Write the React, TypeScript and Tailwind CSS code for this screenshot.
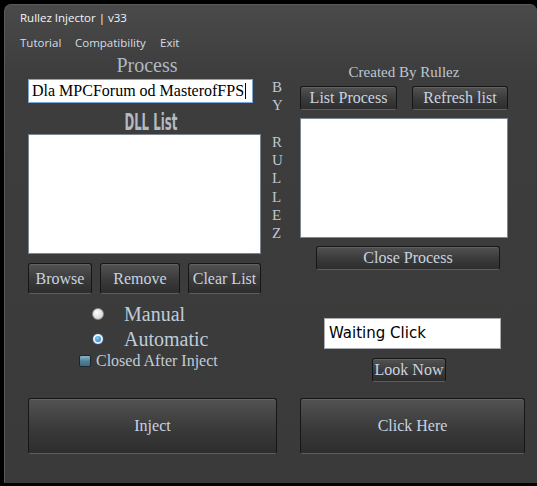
import React from "react";

const serif = "font-['Liberation_Serif','Times_New_Roman',serif]";

function Btn({ className, children }: { className: string; children: React.ReactNode }) {
  return (
    <div
      className={`flex items-center justify-center rounded-[3px] border border-[#161616] border-b-[#5e5e5e] bg-[linear-gradient(to_bottom,#525252,#3a3a3a_55%,#2d2d2d)] shadow-[inset_0_1px_0_rgba(255,255,255,0.10)] text-[16px] leading-none text-[#c8d4e0] ${serif} ${className}`}
    >
      {children}
    </div>
  );
}

function Radio({ checked }: { checked?: boolean }) {
  if (checked) {
    return (
      <div className="flex h-[12px] w-[12px] items-center justify-center rounded-full border border-[#2a4f70] bg-[radial-gradient(circle_at_40%_35%,#ffffff,#d8dde4)]">
        <div className="h-[6px] w-[6px] rounded-full bg-[radial-gradient(circle_at_40%_35%,#7ed0ff,#1a6fb8)]" />
      </div>
    );
  }
  return (
    <div className="h-[12px] w-[12px] rounded-full border border-[#8c8c8c] bg-[radial-gradient(circle_at_40%_35%,#ffffff,#c9c9c9)]" />
  );
}

export default function App() {
  const letters = ["B", "Y", "\u00a0", "R", "U", "L", "L", "E", "Z"];
  return (
    <div className="flex h-[486px] w-[537px] flex-col bg-black pl-[4px] pt-[4px]">
      <div className="h-[479px] w-[533px] rounded-t-[7px] border-l border-t border-[#5a5a5a] bg-[linear-gradient(to_bottom,#4a4a4a_0px,#3d3d3d_70px,#3a3a3a)]">
        {/* title + menu */}
        <div className="pl-[15px] pt-[5px] font-['Open_Sans','Noto_Sans',sans-serif] text-[11.5px] leading-[16px]">
          <div className="text-[#f2f6fa]">Rullez Injector | v33</div>
          <div className="mt-[9px] flex text-[#d6dde4]">
            <span className="w-[55px]">Tutorial</span>
            <span className="w-[85px]">Compatibility</span>
            <span>Exit</span>
          </div>
        </div>

        <div className="pl-[23px]">
          {/* top row */}
          <div className="flex">
            <div className="flex w-[233px] flex-col">
              <div className={`mt-[2px] pl-[5px] text-center text-[20px] leading-[24px] text-[#aeb9c4] ${serif}`}>Process</div>
              <div className={`mt-[2px] flex h-[24px] w-[225px] items-center border border-[#7aa7d6] bg-white pl-[3px] text-[16px] text-black ${serif}`}>
                Dla MPCForum od MasterofFPS
                <span className="ml-[1px] h-[16px] w-[1px] bg-black" />
              </div>
              <div className="mt-[9px] flex h-[20px] justify-center overflow-visible pl-[13px]">
                <span className="inline-block scale-x-[0.51] font-['DejaVu_Sans',sans-serif] text-[23px] font-bold leading-[20px] text-[#b3bac2]">
                  DLL List
                </span>
              </div>
              <div className="mt-[2px] h-[120px] w-[233px] border border-[#7d8590] bg-white" />
              <div className="mt-[9px] flex gap-[8px]">
                <Btn className="h-[31px] w-[64px]">Browse</Btn>
                <Btn className="h-[31px] w-[80px]">Remove</Btn>
                <Btn className="h-[31px] w-[73px]">Clear List</Btn>
              </div>
            </div>

            <div className={`w-[39px] pl-[11px] pt-[27px] text-[15px] leading-[18.3px] text-[#bcc8d4] ${serif}`}>
              {letters.map((l, i) => (
                <div key={i}>{l}</div>
              ))}
            </div>

            <div className="flex w-[208px] flex-col">
              <div className={`mt-[12px] text-center text-[15px] leading-[18px] text-[#bcc8d4] ${serif}`}>Created By Rullez</div>
              <div className="mt-[5px] flex justify-between">
                <Btn className="h-[24px] w-[97px]">List Process</Btn>
                <Btn className="h-[24px] w-[96px]">Refresh list</Btn>
              </div>
              <div className="mt-[8px] h-[120px] w-[208px] border border-[#7d8590] bg-white" />
              <div className="mt-[8px] flex">
                <Btn className="ml-[16px] h-[24px] w-[184px]">Close Process</Btn>
              </div>
            </div>
          </div>

          {/* middle row */}
          <div className="flex h-[88px]">
            <div className={`w-[249px] pt-[7px] text-[#c0ccd8] ${serif}`}>
              <div className="flex h-[25px] items-center pl-[64px] text-[20px]">
                <Radio />
                <span className="ml-[20px]">Manual</span>
              </div>
              <div className="flex h-[25px] items-center pl-[64px] text-[20px]">
                <Radio checked />
                <span className="ml-[20px]">Automatic</span>
              </div>
              <div className="flex h-[20px] items-center pl-[51px] text-[16px]">
                <div className="h-[12px] w-[12px] rounded-[2px] border border-[#1c262c] bg-[linear-gradient(to_bottom,#8fb8c8,#4f8196_50%,#3e6c80)]" />
                <span className="ml-[5px]">Closed After Inject</span>
              </div>
            </div>
            <div className="ml-[23px] flex flex-col">
              <div className="ml-[24px] mt-[24px] flex h-[31px] w-[177px] items-center border border-[#abadb3] bg-white pl-[4px] font-['DejaVu_Sans',sans-serif] text-[15px] text-black">
                Waiting Click
              </div>
              <Btn className="ml-[72px] mt-[9px] h-[24px] w-[74px]">Look Now</Btn>
            </div>
          </div>

          {/* bottom row */}
          <div className="mt-[16px] flex gap-[23px]">
            <Btn className="h-[56px] w-[249px]">Inject</Btn>
            <Btn className="h-[56px] w-[225px]">Click Here</Btn>
          </div>
        </div>
      </div>
    </div>
  );
}
